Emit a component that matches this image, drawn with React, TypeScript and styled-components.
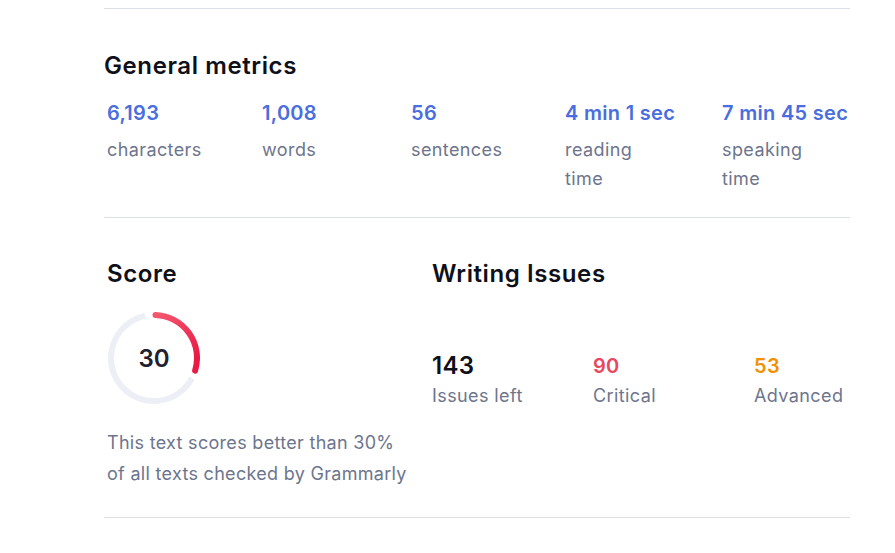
import React from "react";
import styled, { createGlobalStyle } from "styled-components";

const GlobalStyle = createGlobalStyle`
  body {
    margin: 0;
    background: #ffffff;
    font-family: Inter, "Noto Sans", "Liberation Sans", sans-serif;
    color: #0e101a;
  }
`;

const Page = styled.div`
  width: 746px;
  padding: 8px 0 0 104px;
`;

const Divider = styled.hr`
  margin: 0;
  border: none;
  height: 1px;
  background: #dcdeea;
`;

const Section = styled.section<{ $pad: string }>`
  padding: ${(p) => p.$pad};
`;

const Heading = styled.h2`
  margin: 0;
  font-size: 24px;
  line-height: 32px;
  font-weight: 600;
  letter-spacing: 0.6px;
  color: #0e101a;
`;

const MetricsGrid = styled.div`
  display: grid;
  grid-template-columns: 155px 149px 154px 157px auto;
  padding-left: 3px;
  margin-top: 17px;
`;

const Metric = styled.div`
  display: flex;
  flex-direction: column;
`;

const MetricValue = styled.span<{ $color: string; $size?: number }>`
  font-size: ${(p) => p.$size ?? 20}px;
  line-height: 28px;
  font-weight: 600;
  letter-spacing: 0.3px;
  color: ${(p) => p.$color};
`;

const MetricLabel = styled.span<{ $narrow?: boolean }>`
  margin-top: 8px;
  font-size: 18px;
  line-height: 29px;
  letter-spacing: 0.4px;
  color: #6d758d;
  max-width: ${(p) => (p.$narrow ? "100px" : "none")};
`;

const Columns = styled.div`
  display: flex;
`;

const ScoreColumn = styled.div`
  width: 325px;
  flex-shrink: 0;
  padding-left: 3px;
  box-sizing: border-box;
`;

const IssuesColumn = styled.div`
  flex: 1;
  padding-left: 3px;
`;

const Ring = styled.div`
  position: relative;
  width: 92px;
  height: 92px;
  margin: 22px 0 0 1px;
`;

const RingValue = styled.span`
  position: absolute;
  inset: 0;
  display: flex;
  align-items: center;
  justify-content: center;
  font-size: 24px;
  font-weight: 600;
  color: #1f2030;
`;

const Caption = styled.p`
  margin: 23px 0 0;
  font-size: 18px;
  line-height: 31px;
  letter-spacing: 0.3px;
  white-space: nowrap;
  color: #6d758d;
`;

const IssuesRow = styled.div`
  display: flex;
  margin-top: 62px;
`;

const Issue = styled.div`
  width: 161px;
  display: flex;
  flex-direction: column;
`;

const IssueLabel = styled.span`
  margin-top: 2px;
  font-size: 18px;
  line-height: 28px;
  letter-spacing: 0.4px;
  color: #6d758d;
`;

const polar = (deg: number, r: number) => {
  const a = ((deg - 90) * Math.PI) / 180;
  return [46 + r * Math.cos(a), 46 + r * Math.sin(a)];
};

const arc = (from: number, to: number, r: number) => {
  const [x1, y1] = polar(from, r);
  const [x2, y2] = polar(to, r);
  const large = to - from > 180 ? 1 : 0;
  return `M ${x1} ${y1} A ${r} ${r} 0 ${large} 1 ${x2} ${y2}`;
};

function ScoreRing({ score }: { score: number }) {
  const end = (score / 100) * 360;
  return (
    <Ring>
      <svg width="92" height="92" viewBox="0 0 92 92">
        <defs>
          <linearGradient id="scoreGrad" x1="0" y1="0" x2="0.6" y2="1">
            <stop offset="0" stopColor="#f5576f" />
            <stop offset="1" stopColor="#ea1a45" />
          </linearGradient>
        </defs>
        <path d={arc(end + 10, 348, 43)} fill="none" stroke="#eeeff6" strokeWidth="6" />
        <path
          d={arc(2, end - 1, 43)}
          fill="none"
          stroke="url(#scoreGrad)"
          strokeWidth="6"
          strokeLinecap="round"
        />
      </svg>
      <RingValue>{score}</RingValue>
    </Ring>
  );
}

const metrics = [
  { value: "6,193", label: "characters" },
  { value: "1,008", label: "words" },
  { value: "56", label: "sentences" },
  { value: "4 min 1 sec", label: "reading time", narrow: true },
  { value: "7 min 45 sec", label: "speaking time", narrow: true },
];

const issues = [
  { value: "143", label: "Issues left", color: "#0e101a", size: 24 },
  { value: "90", label: "Critical", color: "#e8475f", size: 20 },
  { value: "53", label: "Advanced", color: "#f29100", size: 20 },
];

export default function App() {
  return (
    <>
      <GlobalStyle />
      <Page>
        <Divider />
        <Section $pad="41px 0 24px">
          <Heading>General metrics</Heading>
          <MetricsGrid>
            {metrics.map((m) => (
              <Metric key={m.label}>
                <MetricValue $color="#4a6ee0">{m.value}</MetricValue>
                <MetricLabel $narrow={m.narrow}>{m.label}</MetricLabel>
              </Metric>
            ))}
          </MetricsGrid>
        </Section>
        <Divider />
        <Section $pad="40px 0 28px">
          <Columns>
            <ScoreColumn>
              <Heading>Score</Heading>
              <ScoreRing score={30} />
              <Caption>
                This text scores better than 30%
                <br />
                of all texts checked by Grammarly
              </Caption>
            </ScoreColumn>
            <IssuesColumn>
              <Heading>Writing Issues</Heading>
              <IssuesRow>
                {issues.map((i) => (
                  <Issue key={i.label}>
                    <MetricValue $color={i.color} $size={i.size}>
                      {i.value}
                    </MetricValue>
                    <IssueLabel>{i.label}</IssueLabel>
                  </Issue>
                ))}
              </IssuesRow>
            </IssuesColumn>
          </Columns>
        </Section>
        <Divider />
      </Page>
    </>
  );
}
